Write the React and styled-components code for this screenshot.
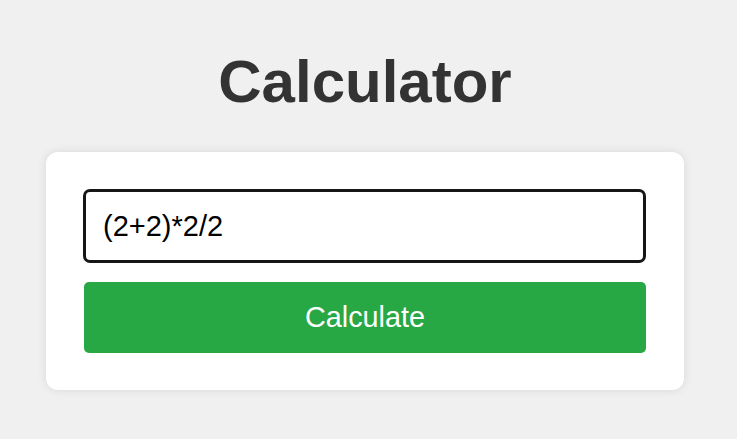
import React, { useState } from "react";
import styled, { createGlobalStyle } from "styled-components";

const Global = createGlobalStyle`
  html, body { margin: 0; padding: 0; background: #f0f0f0; }
  body { font-family: "Liberation Sans", Arial, sans-serif; }
  * { box-sizing: border-box; }
`;

const Page = styled.main`
  display: flex;
  flex-direction: column;
  align-items: center;
  padding: 48px 53px 0 46px;
  min-height: 439px;
`;

const Title = styled.h1`
  margin: 0 0 37px;
  font-size: 60px;
  line-height: 67px;
  font-weight: 700;
  color: #333;
`;

const Card = styled.section`
  width: 638px;
  background: #fff;
  border-radius: 12px;
  box-shadow: 0 0 10px rgba(0, 0, 0, 0.1);
  padding: 37px 38px 37px 37px;
  display: flex;
  flex-direction: column;
  gap: 19px;
`;

const Input = styled.input`
  width: 100%;
  height: 74px;
  border: 3px solid #161616;
  border-radius: 7px;
  padding: 0 17px;
  font-family: "Liberation Sans", Arial, sans-serif;
  font-size: 29px;
  color: #000;
  background: #fff;
  outline: none;
`;

const Button = styled.button`
  margin-left: 1px;
  height: 71px;
  border: none;
  border-radius: 5px;
  background: #28a745;
  color: #fff;
  font-family: "Liberation Sans", Arial, sans-serif;
  font-size: 28.8px;
  cursor: pointer;
`;

export default function App() {
  const [expr, setExpr] = useState("(2+2)*2/2");
  return (
    <>
      <Global />
      <Page>
        <Title>Calculator</Title>
        <Card>
          <Input value={expr} onChange={(e) => setExpr(e.target.value)} />
          <Button>Calculate</Button>
        </Card>
      </Page>
    </>
  );
}
